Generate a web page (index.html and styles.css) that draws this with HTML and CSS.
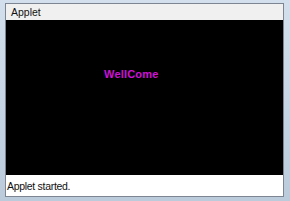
FILE: index.html
```html
<!DOCTYPE html>
<html lang="en">
<head>
    <meta charset="UTF-8">
    <title>Applet Viewer</title>
    <link rel="stylesheet" href="styles.css">
</head>
<body>
    <div class="frame">
        <div class="panel">
            <div class="menu-bar">
                <span class="menu">Applet</span>
            </div>
            <div class="canvas">
                <span class="welcome">WellCome</span>
            </div>
            <div class="status">Applet started.</div>
        </div>
    </div>
</body>
</html>
```

FILE: styles.css
```css
body {
    margin: 0;
    padding: 0;
    font-family: "Liberation Sans", Arial, sans-serif;
}
.frame {
    width: 290px;
    height: 201px;
    box-sizing: border-box;
    padding: 3px 6px 4px 5px;
    background: linear-gradient(to bottom, #d3dfec, #c4d3e3 60%, #bccbdc);
}
.panel {
    border: 1px solid #7c8591;
    display: flex;
    flex-direction: column;
    height: 100%;
    box-sizing: border-box;
}
.menu-bar {
    height: 16px;
    background: #f0f0f0;
    display: flex;
    align-items: center;
    padding-left: 5px;
}
.menu {
    font-size: 10.5px;
    color: #111;
}
.canvas {
    height: 155px;
    background: #000;
    box-sizing: border-box;
    padding: 48px 0 0 98px;
}
.welcome {
    display: block;
    color: #d010d8;
    font-size: 11px;
    font-weight: bold;
    line-height: 12px;
    letter-spacing: 0.2px;
}
.status {
    flex: 1;
    background: #fff;
    font-size: 10.5px;
    letter-spacing: -0.3px;
    padding: 5px 0 0 1px;
    color: #111;
}
```
